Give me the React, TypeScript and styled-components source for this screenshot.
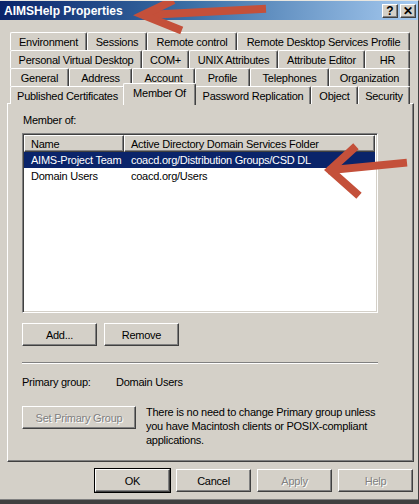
import React from "react";
import styled, { createGlobalStyle } from "styled-components";

const Global = createGlobalStyle`
  html, body { margin: 0; padding: 0; background: #d4d0c8; }
  body { font-family: "Liberation Sans", Arial, sans-serif; font-size: 11px; letter-spacing: -0.25px; color: #000; }
  * { box-sizing: border-box; }
`;

const Win = styled.div`
  position: relative;
  width: 419px;
  height: 504px;
  background: #d4d0c8;
  border-top: 1px solid #e8e6e0;
  border-right: 1px solid #404040;
  border-bottom: 4px solid #404040;
  box-shadow: inset 0 -1px 0 #808080;
  display: flex;
  flex-direction: column;
  overflow: hidden;
`;

const TitleBar = styled.div`
  height: 19px;
  display: flex;
  align-items: center;
  justify-content: space-between;
  padding: 0 2px 0 4px;
  background: linear-gradient(to right, #0a246a 0%, #3a6ea5 45%, #a6caf0 100%);
`;

const Title = styled.span`
  color: #fff;
  font-weight: bold;
  font-size: 12px;
  letter-spacing: 0;
`;

const CaptionButtons = styled.div`
  display: flex;
  gap: 2px;
`;

const CaptionBtn = styled.div`
  width: 16px;
  height: 14px;
  background: #d4d0c8;
  border-top: 1px solid #fff;
  border-left: 1px solid #fff;
  border-right: 1px solid #404040;
  border-bottom: 1px solid #404040;
  box-shadow: inset -1px -1px 0 #808080;
  display: flex;
  align-items: center;
  justify-content: center;
  font-weight: bold;
  font-size: 12px;
  line-height: 1;
  letter-spacing: 0;
`;

const Body = styled.div`
  flex: 1;
  display: flex;
  flex-direction: column;
  padding: 12px 5px 0 7px;
`;

const Tabs = styled.div`
  display: flex;
  flex-direction: column;
  padding-left: 3px;
  margin-bottom: -1px;
  position: relative;
  z-index: 2;
`;

const TabRow = styled.div`
  display: flex;
  height: 18px;
`;

const Tab = styled.div<{ $w: number; $active?: boolean }>`
  width: ${(p) => p.$w}px;
  flex: none;
  display: flex;
  align-items: center;
  justify-content: center;
  background: #d4d0c8;
  border-top: 1px solid #fff;
  border-left: 1px solid #fff;
  border-right: 1px solid #404040;
  box-shadow: inset -1px 0 0 #808080;
  border-radius: 2px 2px 0 0;
  white-space: nowrap;
  ${(p) =>
    p.$active
      ? `
    position: relative;
    z-index: 3;
    width: ${p.$w + 3}px;
    margin: -3px -1px 0 -2px;
    height: 22px;
    padding-bottom: 4px;
  `
      : `padding-top: 1px;`}
`;

const Panel = styled.div`
  height: 359px;
  margin-right: -1px;
  border-top: 1px solid #fff;
  border-left: 1px solid #fff;
  border-right: 1px solid #404040;
  border-bottom: 1px solid #404040;
  box-shadow: inset -1px -1px 0 #808080;
  padding: 9px 0 0 14px;
  display: flex;
  flex-direction: column;
`;

const Label = styled.div`
  height: 14px;
  line-height: 14px;
  margin-left: 1px;
`;

const ListView = styled.div`
  margin-top: 6px;
  width: 356px;
  height: 180px;
  background: #fff;
  border-top: 1px solid #808080;
  border-left: 1px solid #808080;
  border-right: 1px solid #fff;
  border-bottom: 1px solid #fff;
  box-shadow: inset 1px 1px 0 #404040, inset -1px -1px 0 #d4d0c8;
  padding: 1px 2px 0 1px;
`;

const HeaderRow = styled.div`
  display: flex;
  height: 17px;
`;

const HeaderCell = styled.div<{ $w?: number }>`
  ${(p) => (p.$w ? `width: ${p.$w}px; flex: none;` : `flex: 1;`)}
  background: #d4d0c8;
  border-top: 1px solid #fff;
  border-left: 1px solid #fff;
  border-right: 1px solid #404040;
  border-bottom: 1px solid #404040;
  box-shadow: inset -1px -1px 0 #808080;
  padding-left: 6px;
  display: flex;
  align-items: center;
  white-space: nowrap;
`;

const Row = styled.div<{ $sel?: boolean }>`
  display: flex;
  height: 16px;
  align-items: center;
  background: ${(p) => (p.$sel ? "#0a246a" : "transparent")};
  color: ${(p) => (p.$sel ? "#fff" : "#000")};
`;

const Cell = styled.div<{ $w?: number }>`
  ${(p) => (p.$w ? `width: ${p.$w}px; flex: none;` : `flex: 1;`)}
  padding-left: 7px;
  white-space: nowrap;
`;

const ButtonRow = styled.div`
  display: flex;
  gap: 7px;
  margin-top: 10px;
`;

const Button = styled.div<{ $w?: number; $disabled?: boolean; $default?: boolean }>`
  width: ${(p) => p.$w ?? 75}px;
  height: 23px;
  flex: none;
  background: #d4d0c8;
  display: flex;
  align-items: center;
  justify-content: center;
  white-space: nowrap;
  border-top: 1px solid #fff;
  border-left: 1px solid #fff;
  border-right: 1px solid #404040;
  border-bottom: 1px solid #404040;
  box-shadow: inset -1px -1px 0 #808080;
  ${(p) => (p.$default ? `outline: 1px solid #000; outline-offset: 0;` : "")}
  ${(p) => (p.$disabled ? `color: #808080; text-shadow: 1px 1px 0 #fff;` : "")}
`;

const Separator = styled.div`
  margin-top: 16px;
  width: 356px;
  height: 2px;
  border-top: 1px solid #808080;
  border-bottom: 1px solid #fff;
`;

const PrimaryRow = styled.div`
  margin-top: 11px;
  display: flex;
  height: 14px;
  align-items: center;
`;

const PrimaryLabel = styled.span`
  width: 94px;
  flex: none;
`;

const SetRow = styled.div`
  margin-top: 17px;
  display: flex;
  gap: 10px;
`;

const Note = styled.div`
  line-height: 14px;
  margin-top: -1px;
  width: 240px;
`;

const Footer = styled.div`
  display: flex;
  justify-content: flex-end;
  padding: 7px 0 0 0;
  gap: 6px;
`;

const Overlay = styled.svg`
  position: absolute;
  left: 0;
  top: 0;
  pointer-events: none;
  z-index: 10;
`;

const tabRows: { label: string; w: number; active?: boolean }[][] = [
  [
    { label: "Environment", w: 77 },
    { label: "Sessions", w: 60 },
    { label: "Remote control", w: 90 },
    { label: "Remote Desktop Services Profile", w: 173 },
  ],
  [
    { label: "Personal Virtual Desktop", w: 132 },
    { label: "COM+", w: 47 },
    { label: "UNIX Attributes", w: 89 },
    { label: "Attribute Editor", w: 87 },
    { label: "HR", w: 45 },
  ],
  [
    { label: "General", w: 59 },
    { label: "Address", w: 63 },
    { label: "Account", w: 63 },
    { label: "Profile", w: 55 },
    { label: "Telephones", w: 79 },
    { label: "Organization", w: 81 },
  ],
  [
    { label: "Published Certificates", w: 115 },
    { label: "Member Of", w: 70, active: true },
    { label: "Password Replication", w: 116 },
    { label: "Object", w: 47 },
    { label: "Security", w: 52 },
  ],
];

export default function App() {
  return (
    <>
      <Global />
      <Win>
        <TitleBar>
          <Title>AIMSHelp Properties</Title>
          <CaptionButtons>
            <CaptionBtn>?</CaptionBtn>
            <CaptionBtn>✕</CaptionBtn>
          </CaptionButtons>
        </TitleBar>
        <Body>
          <Tabs>
            {tabRows.map((row, i) => (
              <TabRow key={i}>
                {row.map((t) => (
                  <Tab key={t.label} $w={t.w} $active={t.active}>
                    {t.label}
                  </Tab>
                ))}
              </TabRow>
            ))}
          </Tabs>
          <Panel>
            <Label>Member of:</Label>
            <ListView>
              <HeaderRow>
                <HeaderCell $w={100}>Name</HeaderCell>
                <HeaderCell>Active Directory Domain Services Folder</HeaderCell>
              </HeaderRow>
              <Row $sel>
                <Cell $w={100}>AIMS-Project Team</Cell>
                <Cell>coacd.org/Distribution Groups/CSD DL</Cell>
              </Row>
              <Row>
                <Cell $w={100}>Domain Users</Cell>
                <Cell>coacd.org/Users</Cell>
              </Row>
            </ListView>
            <ButtonRow>
              <Button>Add...</Button>
              <Button>Remove</Button>
            </ButtonRow>
            <Separator />
            <PrimaryRow>
              <PrimaryLabel>Primary group:</PrimaryLabel>
              <span>Domain Users</span>
            </PrimaryRow>
            <SetRow>
              <Button $w={114} $disabled>
                Set Primary Group
              </Button>
              <Note>
                There is no need to change Primary group unless you have
                Macintosh clients or POSIX-compliant applications.
              </Note>
            </SetRow>
          </Panel>
          <Footer>
            <Button $default>OK</Button>
            <Button>Cancel</Button>
            <Button $disabled>Apply</Button>
            <Button $disabled>Help</Button>
          </Footer>
        </Body>
        <Overlay width="419" height="504" viewBox="0 0 419 504">
          <g stroke="#c4503a" strokeWidth="8" strokeLinecap="square" strokeLinejoin="miter" fill="none">
            <path d="M146 14 L262 8" />
            <path d="M170 1 L143 14 L178 28" />
            <path d="M332 169 L403 162" />
            <path d="M353 148 L330 169 L356 192" />
          </g>
        </Overlay>
      </Win>
    </>
  );
}
